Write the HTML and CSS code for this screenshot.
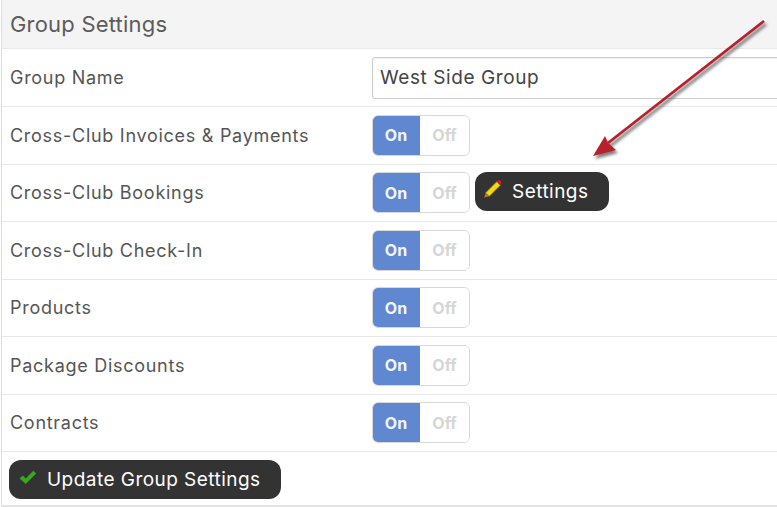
FILE: index.html

```html
<!DOCTYPE html>
<html lang="en">
<head>
  <meta charset="UTF-8" />
  <title>Group Settings</title>
  <link rel="stylesheet" href="styles.css">
</head>
<body>
  <div class="panel">
    <h2 class="panel-title">Group Settings</h2>

    <div class="row row-name">
      <label>Group Name</label>
      <input class="text-input" type="text" value="West Side Group">
    </div>

    <div class="row">
      <label>Cross-Club Invoices &amp; Payments</label>
      <div class="toggle"><span class="on">On</span><span class="off">Off</span></div>
    </div>

    <div class="row">
      <label>Cross-Club Bookings</label>
      <div class="toggle"><span class="on">On</span><span class="off">Off</span></div>
      <button class="dark-btn settings-btn">
        <svg class="icon" width="18" height="18" viewBox="1.5 1.5 15.5 15.5">
          <path d="M3 12.5 L12.5 3 L15.5 6 L6 15.5 Z" fill="#f5d90f" stroke="#a88a10" stroke-width="0.6"/>
          <path d="M12.5 3 L13.8 1.8 Q14.8 1.2 15.8 2.2 Q16.8 3.2 16.2 4.2 L15.5 6 Z" fill="#c8202a"/>
          <path d="M3 12.5 L6 15.5 L1.6 16.6 Z" fill="#b5763a"/>
        </svg>
        Settings
      </button>
    </div>

    <div class="row">
      <label>Cross-Club Check-In</label>
      <div class="toggle"><span class="on">On</span><span class="off">Off</span></div>
    </div>

    <div class="row">
      <label>Products</label>
      <div class="toggle"><span class="on">On</span><span class="off">Off</span></div>
    </div>

    <div class="row">
      <label>Package Discounts</label>
      <div class="toggle"><span class="on">On</span><span class="off">Off</span></div>
    </div>

    <div class="row">
      <label>Contracts</label>
      <div class="toggle"><span class="on">On</span><span class="off">Off</span></div>
    </div>

    <div class="footer">
      <button class="dark-btn update-btn">
        <svg class="icon" width="18" height="15" viewBox="1 1 16.5 13.2">
          <path d="M1.5 8.5 L4.5 5.8 L7.2 8.6 L14 1.5 L16.8 4 L7.2 13.6 Z" fill="#3aa51f"/>
        </svg>
        Update Group Settings
      </button>
    </div>
  </div>

  <svg class="arrow" width="777" height="507" viewBox="0 0 777 507">
    <defs>
      <filter id="soft" x="-20%" y="-20%" width="140%" height="140%">
        <feGaussianBlur stdDeviation="1.6"/>
      </filter>
    </defs>
    <g fill="#444" stroke="#444" opacity="0.7" filter="url(#soft)" transform="translate(2 3)">
      <path d="M764 21 L608 143" stroke-width="3" fill="none"/>
      <path d="M593 156 L605 136 L608 143 L616 150 Z" stroke="none"/>
    </g>
    <path d="M764 21 L608 143" stroke="#b8202b" stroke-width="2.8" fill="none"/>
    <path d="M593 156 L605 136 L608 143 L616 150 Z" fill="#b8202b"/>
  </svg>
</body>
</html>
```

FILE: styles.css

```css
html, body { margin: 0; padding: 0; height: 507px; overflow: hidden; }
body { font-family: "Inter", "Lato", sans-serif; background: white; color: #555; position: relative; }

.panel { width: 800px; height: 507px; margin-left: 1px; box-sizing: border-box; border-left: 1px solid #ddd; border-bottom: 2px solid #e4e4e4; }
.panel-title { margin: 0; height: 49px; box-sizing: border-box; padding-left: 8px; line-height: 48px; font-size: 22px; font-weight: 400; letter-spacing: 0.2px; color: #5c5c5c; background: #f4f4f4; border-bottom: 1px solid #e9e9e9; }

.row { display: flex; align-items: center; height: 57.5px; box-sizing: border-box; padding-left: 8px; border-bottom: 1px solid #e8e8e8; }
.row-name { height: 58px; }
.row label { width: 362px; font-size: 18px; letter-spacing: 0.72px; color: #555; flex-shrink: 0; }

.text-input { width: 440px; height: 42px; box-sizing: border-box; padding: 0 7px; font-family: inherit; font-size: 19px; letter-spacing: 0.58px; color: #444; border: 1px solid #ccc; border-radius: 3px; box-shadow: inset 0 1px 2px rgba(0,0,0,0.06); }

.toggle { display: flex; width: 98px; height: 41px; box-sizing: border-box; font-size: 16px; font-weight: 700; border-radius: 6px; overflow: hidden; border: 1px solid #d8d8d8; flex-shrink: 0; }
.toggle span { display: flex; align-items: center; justify-content: center; }
.toggle .on { width: 48px; margin: -1px 0 -1px -1px; background: #5f88d0; color: #f2f5fb; }
.toggle .off { flex: 1; background: white; color: #d6d6d6; }

.dark-btn { display: flex; align-items: center; height: 39px; box-sizing: border-box; border: none; border-radius: 12px; background: #333; color: white; font-family: inherit; font-size: 19px; letter-spacing: 0.46px; }
.settings-btn { width: 134px; margin: 0 0 2px 5px; padding: 0 0 0 9px; gap: 10px; }
.update-btn { width: 272px; padding: 0 0 0 10px; gap: 10px; }
.icon { flex-shrink: 0; margin-top: -5px; }

.footer { padding: 8px 0 0 7px; }

.arrow { position: absolute; left: 0; top: 0; pointer-events: none; }
```
